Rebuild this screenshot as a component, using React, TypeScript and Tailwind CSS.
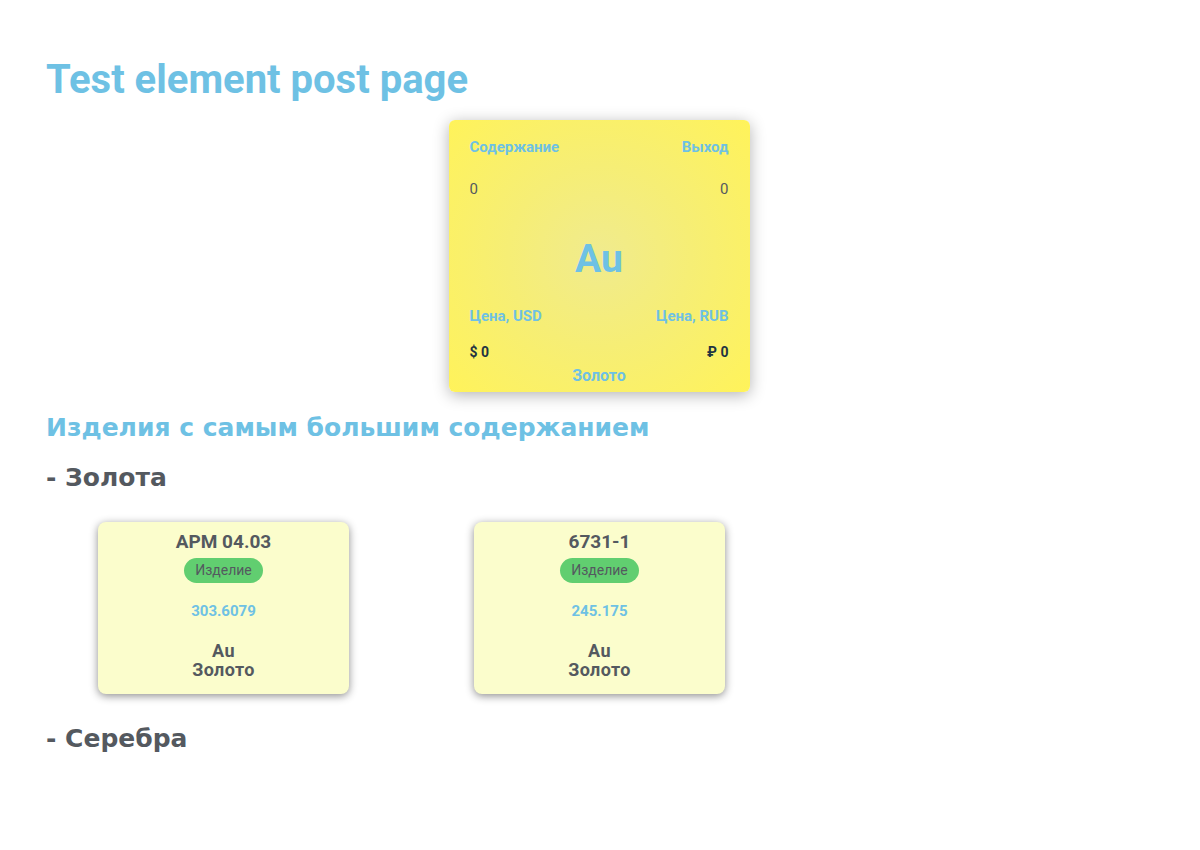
import React from 'react'

type Product = {
  name: string;
  value: string;
  symbol: string;
  metal: string;
}

const goldProducts: Product[] = [
  { name: 'APM 04.03', value: '303.6079', symbol: 'Au', metal: 'Золото' },
  { name: '6731-1', value: '245.175', symbol: 'Au', metal: 'Золото' },
]

const ElementCard = () => {
  return (
    <div className="w-[301px] h-[272px] rounded-md shadow-[0_3px_16px_rgba(0,0,0,0.3)] bg-[radial-gradient(circle_at_center,#f0eb8e_0%,#f6ee75_45%,#fff35a_100%)] px-[21px] pt-[19px] pb-[8px] flex flex-col font-['Roboto',sans-serif]">
      <div className="flex justify-between text-[15px] font-bold text-[#6ec1e4] leading-4">
        <span>Содержание</span>
        <span>Выход</span>
      </div>
      <div className="flex justify-between text-[15px] text-[#54595f] mt-[26px] leading-4">
        <span>0</span>
        <span>0</span>
      </div>
      <div className="flex-1 flex items-center justify-center text-[39px] font-bold text-[#6ec1e4] leading-none pt-[14px]">
        Au
      </div>
      <div className="flex justify-between text-[15px] font-bold text-[#6ec1e4] leading-4">
        <span>Цена, USD</span>
        <span>Цена, RUB</span>
      </div>
      <div className="flex justify-between text-[14px] font-bold text-[#1f3441] mt-[20px] leading-4">
        <span>$ 0</span>
        <span>₽ 0</span>
      </div>
      <div className="text-center text-[16px] font-bold text-[#6ec1e4] mt-[8px] leading-4">
        Золото
      </div>
    </div>
  )
}

const ProductCard = ({ product }: { product: Product }) => {
  return (
    <div className="w-[251px] h-[172px] rounded-lg bg-[#fbfdcc] shadow-[0_2px_8px_rgba(0,0,0,0.45)] flex flex-col items-center pt-[8px] font-['Roboto',sans-serif]">
      <div className="text-[19px] font-bold text-[#54595f] leading-6">{product.name}</div>
      <div className="mt-[4px] h-[25px] px-[11px] rounded-full bg-[#61ce70] flex items-center text-[14px] text-[#54595f]">
        Изделие
      </div>
      <div className="mt-[20px] text-[15px] font-bold text-[#6ec1e4] leading-4">{product.value}</div>
      <div className="mt-[22px] text-[18px] font-bold text-[#54595f] leading-[19px] tracking-[0.4px] text-center">
        <div>{product.symbol}</div>
        <div>{product.metal}</div>
      </div>
    </div>
  )
}

const App = () => {
  return (
    <div className="w-full min-h-[850px] bg-white px-[46px] pt-[58px]">
      <h1 className="text-[40px] font-bold text-[#6ec1e4] leading-[44px] font-['Roboto',sans-serif]">Test element post page</h1>

      <div className="flex justify-center mt-[18px] pr-[2px]">
        <ElementCard />
      </div>

      <h2 className="mt-[19px] text-[25px] font-bold text-[#6ec1e4] leading-[34px] font-['DejaVu_Sans',sans-serif]">
        Изделия с самым большим содержанием
      </h2>
      <h3 className="mt-[16px] text-[25px] font-bold text-[#54595f] leading-[34px] font-['DejaVu_Sans',sans-serif]">- Золота</h3>

      <div className="flex gap-[125px] ml-[52px] mt-[27px]">
        {goldProducts.map((product, idx) =>
          <ProductCard key={idx + 'gold'} product={product} />
        )}
      </div>

      <h3 className="mt-[28px] text-[25px] font-bold text-[#54595f] leading-[34px] font-['DejaVu_Sans',sans-serif]">- Серебра</h3>
    </div>
  )
}

export default App
